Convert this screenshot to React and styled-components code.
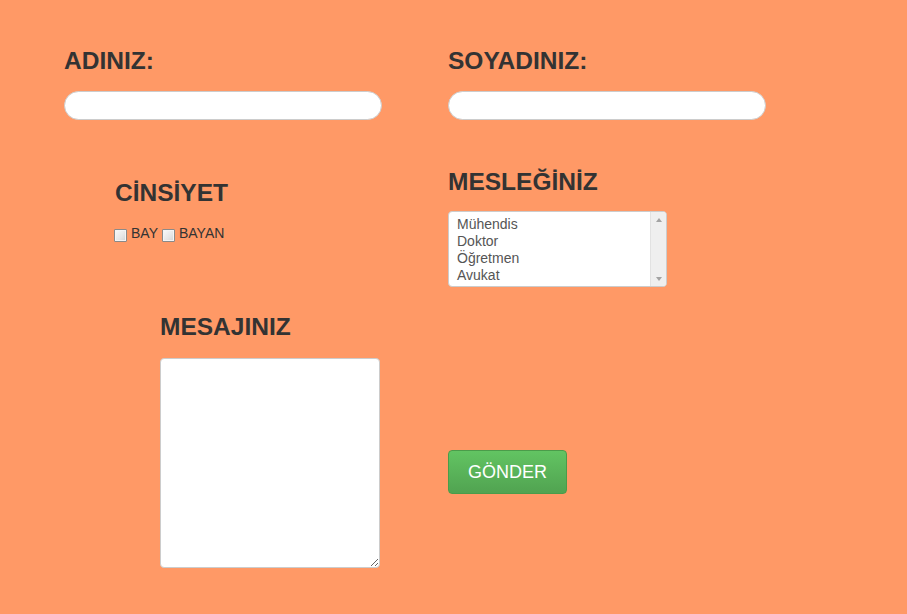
import React from "react";
import styled, { createGlobalStyle } from "styled-components";

const GlobalStyle = createGlobalStyle`
  html, body {
    margin: 0;
    padding: 0;
    background: #ff9966;
    font-family: "Liberation Sans", Arial, sans-serif;
    color: #333;
  }
`;

const jobs = ["Mühendis", "Doktor", "Öğretmen", "Avukat"];

function App() {
  return (
    <>
      <GlobalStyle />
      <Page>
        <Form>
          <Cell>
            <Heading>ADINIZ:</Heading>
            <TextInput type="text" />
          </Cell>
          <Cell>
            <Heading>SOYADINIZ:</Heading>
            <TextInput type="text" />
          </Cell>

          <Cell indent={51} top={11}>
            <Heading>CİNSİYET</Heading>
            <CheckRow>
              <Check type="checkbox" />
              <CheckLabel>BAY</CheckLabel>
              <Check type="checkbox" />
              <CheckLabel>BAYAN</CheckLabel>
            </CheckRow>
          </Cell>
          <Cell>
            <Heading>MESLEĞİNİZ</Heading>
            <JobList>
              <JobOptions role="listbox" aria-multiselectable="true" tabIndex={0}>
                {jobs.map((job) => (
                  <JobOption role="option" key={job}>
                    {job}
                  </JobOption>
                ))}
              </JobOptions>
              <ScrollRail>
                <ScrollArrow dir="up" />
                <ScrollArrow dir="down" />
              </ScrollRail>
            </JobList>
          </Cell>

          <Cell indent={96}>
            <Heading>MESAJINIZ</Heading>
            <Message />
          </Cell>
          <Cell>
            <SendButton type="button">GÖNDER</SendButton>
          </Cell>
        </Form>
      </Page>
    </>
  );
}

const Page = styled.div`
  width: 907px;
  height: 614px;
  overflow: hidden;
  padding: 48px 0 0 64px;
  box-sizing: border-box;
`;

const Form = styled.div`
  display: grid;
  grid-template-columns: 384px 1fr;
  grid-template-rows: 121px 145px auto;
`;

const Cell = styled.div`
  display: flex;
  flex-direction: column;
  align-items: flex-start;
  padding-left: ${(props) => props.indent || 0}px;
  padding-top: ${(props) => props.top || 0}px;
`;

const Heading = styled.h3`
  margin: 0;
  font-size: 24.5px;
  line-height: 26px;
  font-weight: bold;
  color: #333;
`;

const TextInput = styled.input`
  margin-top: 17px;
  width: 318px;
  height: 29px;
  box-sizing: border-box;
  border: 1px solid #cccccc;
  border-radius: 15px;
  background: #fff;
  outline: none;
  padding: 0 12px;
  font-size: 14px;
`;

const CheckRow = styled.div`
  display: flex;
  align-items: center;
  margin-top: 22px;
  margin-left: -1px;
`;

const Check = styled.input`
  appearance: none;
  margin: 0 4px 0 0;
  width: 13px;
  height: 13px;
  box-sizing: border-box;
  border: 1px solid #8a8a8a;
  border-radius: 1px;
  background: linear-gradient(135deg, #fafafa 0%, #e6e6e6 60%, #d2d2d2 100%);
  box-shadow: inset 0 0 0 1px #f4f4f4;
`;

const CheckLabel = styled.span`
  font-size: 14px;
  line-height: 14px;
  color: #333;
  margin-right: 4px;
  position: relative;
  top: -2px;
`;

const JobList = styled.div`
  margin-top: 16px;
  width: 219px;
  height: 76px;
  box-sizing: border-box;
  display: flex;
  border: 1px solid #cccccc;
  border-radius: 4px;
  background: #fff;
  overflow: hidden;
`;

const JobOptions = styled.div`
  flex: 1;
  padding: 4px 0 4px 6px;
  font-family: "Liberation Sans", Arial, sans-serif;
  font-size: 14px;
  color: #555;
  outline: none;
`;

const JobOption = styled.div`
  padding: 0 2px;
  line-height: 17px;
  height: 17px;
  white-space: nowrap;
  cursor: default;
`;

const ScrollRail = styled.div`
  width: 16px;
  display: flex;
  flex-direction: column;
  justify-content: space-between;
  align-items: center;
  padding: 6px 0 5px;
  box-sizing: border-box;
  background: #efefef;
  border-left: 1px solid #e2e2e2;
`;

const ScrollArrow = styled.span`
  width: 0;
  height: 0;
  border-left: 3.5px solid transparent;
  border-right: 3.5px solid transparent;
  border-bottom: ${(props) => (props.dir === "up" ? "4px solid #a3a3a3" : "0")};
  border-top: ${(props) => (props.dir === "down" ? "4px solid #a3a3a3" : "0")};
`;

const Message = styled.textarea`
  margin-top: 18px;
  width: 220px;
  height: 210px;
  box-sizing: border-box;
  border: 1px solid #cccccc;
  border-radius: 4px;
  background: #fff;
  outline: none;
  resize: both;
`;

const SendButton = styled.button`
  margin-top: 136px;
  width: 119px;
  height: 44px;
  border: 1px solid #4a9c4a;
  border-radius: 4px;
  background: linear-gradient(to bottom, #62c462, #51a351);
  color: #fff;
  font-family: "Liberation Sans", Arial, sans-serif;
  font-size: 18px;
  cursor: pointer;
`;

export default App;
